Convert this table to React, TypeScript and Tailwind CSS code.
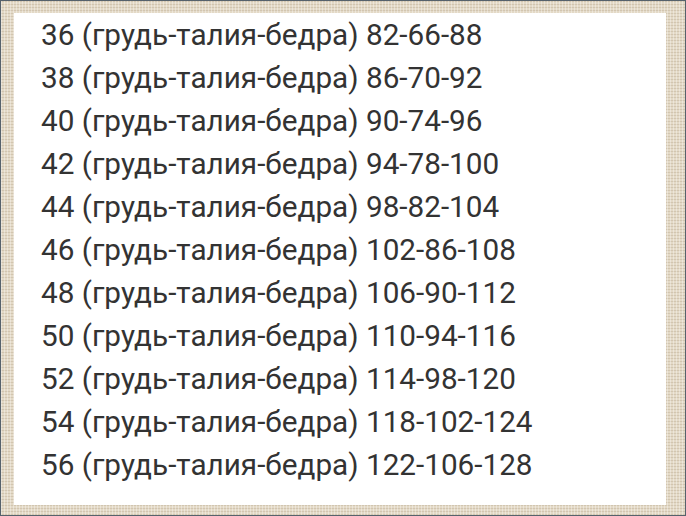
const rows: [string, string][] = [
  ["36", "82-66-88"],
  ["38", "86-70-92"],
  ["40", "90-74-96"],
  ["42", "94-78-100"],
  ["44", "98-82-104"],
  ["46", "102-86-108"],
  ["48", "106-90-112"],
  ["50", "110-94-116"],
  ["52", "114-98-120"],
  ["54", "118-102-124"],
  ["56", "122-106-128"],
];

export default function App() {
  return (
    <div className="h-[516px] w-[686px] border border-[#56626c] bg-[#e3d9c6] bg-[repeating-linear-gradient(90deg,rgba(255,255,255,0.35)_0px,rgba(255,255,255,0.35)_1px,transparent_1px,transparent_3px),repeating-linear-gradient(0deg,rgba(160,140,110,0.25)_0px,rgba(160,140,110,0.25)_1px,transparent_1px,transparent_3px)] pb-[10px] pl-[13px] pr-[19px] pt-[12px]">
      <div className="h-full w-full bg-white pl-[27px] font-['Roboto',sans-serif] text-[29.7px] leading-[43px] text-[#333333]">
        {rows.map(([size, measures]) => (
          <div key={size}>
            {size} (грудь-талия-бедра) {measures}
          </div>
        ))}
      </div>
    </div>
  );
}
